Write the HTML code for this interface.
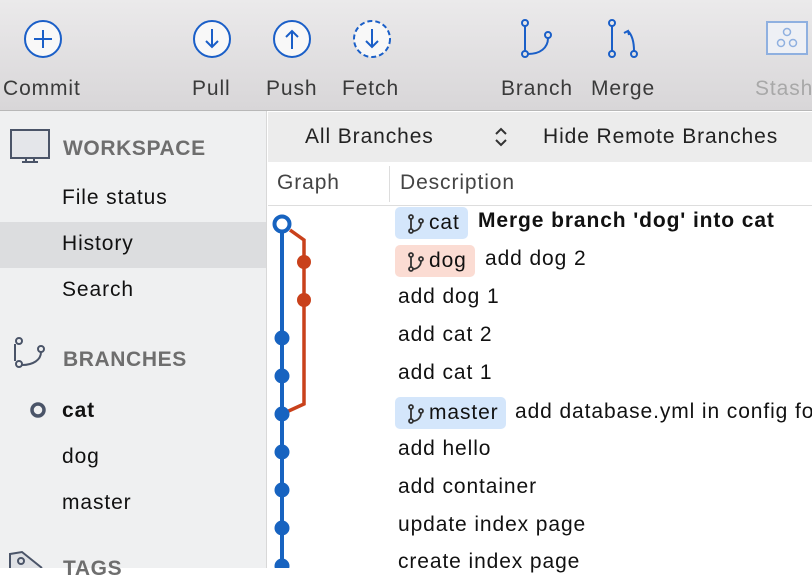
<!DOCTYPE html>
<html><head><style>
*{margin:0;padding:0;box-sizing:border-box}
body{width:812px;height:568px;overflow:hidden;font-family:"Liberation Sans",sans-serif;background:#fff;position:relative;font-size:21px;letter-spacing:0.9px}
.tb{position:absolute;left:0;top:0;width:812px;height:111px;background:linear-gradient(#ebeaeb,#d8d6d8);border-bottom:1px solid #b8b8b8}
.lbl{position:absolute;top:77px;font-size:21px;color:#3a3a3a}
.side{position:absolute;left:0;top:111px;width:267px;height:457px;background:#eff0f1;border-right:1px solid #d8d8d8}
.s{position:absolute;color:#111}
.h{position:absolute;color:#6e6e6e;font-weight:bold;letter-spacing:0.6px}
.fb{position:absolute;left:268px;top:112px;width:544px;height:50px;background:#ececec;color:#222}
.ch{position:absolute;left:268px;top:162px;width:544px;height:44px;background:#fff;border-bottom:1px solid #ddd;color:#444}
.r{position:absolute;left:398px;color:#111;white-space:nowrap}
.tag{position:absolute;height:32px;border-radius:5px;color:#111;padding-left:36px;line-height:32px;white-space:nowrap}
.tag svg{position:absolute;left:12px;top:7px}
</style></head><body>
<div class="tb">
<svg width="812" height="70" style="position:absolute;left:0;top:0" fill="none" stroke="#1a5fc8" stroke-width="2">
<circle cx="43" cy="39" r="18" fill="#f8f8f8"/><path d="M43 30v18M34 39h18"/>
<circle cx="212" cy="39" r="18" fill="#f8f8f8"/><path d="M212 29v18M206 41l6 6 6-6"/>
<circle cx="292" cy="39" r="18" fill="#f8f8f8"/><path d="M292 49V31M286 37l6-6 6 6"/>
<circle cx="372" cy="39" r="18" fill="#f8f8f8" stroke-dasharray="5 3"/><path d="M372 29v18M366 41l6 6 6-6"/>
<circle cx="525" cy="23" r="3"/><circle cx="525" cy="54" r="3"/><circle cx="548" cy="35" r="3"/><path d="M525 26v25M548 38c0 10-8 16-20 16"/>
<circle cx="612" cy="23" r="3"/><circle cx="612" cy="54" r="3"/><circle cx="634" cy="54" r="3"/><path d="M612 26v25M634 51c0-10-2-16-6-20M624 33l4-2 1 4"/>
<rect x="767" y="22" width="40" height="32" stroke="#8fb0e0" fill="#eef0f5"/><g stroke="#8fb0e0" stroke-width="1.5"><circle cx="787" cy="32" r="3.5"/><circle cx="781" cy="43" r="3.5"/><circle cx="793" cy="43" r="3.5"/></g>
</svg>
<div class="lbl" style="left:3px">Commit</div>
<div class="lbl" style="left:192px">Pull</div>
<div class="lbl" style="left:266px">Push</div>
<div class="lbl" style="left:342px">Fetch</div>
<div class="lbl" style="left:501px">Branch</div>
<div class="lbl" style="left:591px">Merge</div>
<div class="lbl" style="left:755px;color:#a8a8a8">Stash</div>
</div>
<div class="side">
<svg width="60" height="457" style="position:absolute;left:0;top:0" fill="none" stroke="#4a5468" stroke-width="2">
<rect x="11" y="19" width="38" height="28" fill="#e4e6ea"/><path d="M22 51h16M26 47v4M34 47v4"/>
<circle cx="19" cy="230" r="3"/><circle cx="19" cy="253" r="3"/><circle cx="41" cy="238" r="3"/><path d="M15 233v17M41 241c0 8-8 13-19 13"/>
<circle cx="38" cy="299" r="6" stroke-width="3.5"/>
<path d="M10 457v-14l12-2 20 16" fill="#dfe1e5"/><circle cx="21" cy="450" r="3"/>
</svg>
<div class="h" style="left:63px;top:26px">WORKSPACE</div>
<div class="s" style="left:62px;top:75px">File status</div>
<div style="position:absolute;left:0;top:111px;width:266px;height:46px;background:#dcdddf"></div>
<div class="s" style="left:62px;top:121px">History</div>
<div class="s" style="left:62px;top:167px">Search</div>
<div class="h" style="left:63px;top:237px">BRANCHES</div>
<div class="s" style="left:62px;top:288px;font-weight:bold">cat</div>
<div class="s" style="left:62px;top:334px">dog</div>
<div class="s" style="left:62px;top:380px">master</div>
<div class="h" style="left:63px;top:446px">TAGS</div>
</div>
<div class="fb"><span style="position:absolute;left:37px;top:13px">All Branches</span>
<svg width="14" height="22" style="position:absolute;left:226px;top:14px" fill="none" stroke="#333" stroke-width="2"><path d="M2 8l5-5 5 5M2 14l5 5 5-5"/></svg>
<span style="position:absolute;left:275px;top:13px">Hide Remote Branches</span></div>
<div class="ch"><span style="position:absolute;left:9px;top:9px">Graph</span><div style="position:absolute;left:121px;top:4px;width:1px;height:36px;background:#ddd"></div><span style="position:absolute;left:132px;top:9px">Description</span></div>
<svg width="60" height="362" style="position:absolute;left:268px;top:206px">
<path d="M14 18V362" stroke="#1763c0" stroke-width="4"/>
<path d="M22 24l14 10v164l-22 10" stroke="#c9411b" stroke-width="3.5" fill="none"/>
<circle cx="14" cy="18" r="7.5" fill="#fff" stroke="#1763c0" stroke-width="4"/>
<g fill="#c9411b"><circle cx="36" cy="56" r="7"/><circle cx="36" cy="94" r="7"/></g>
<g fill="#1763c0"><circle cx="14" cy="132" r="7.5"/><circle cx="14" cy="170" r="7.5"/><circle cx="14" cy="208" r="7.5"/><circle cx="14" cy="246" r="7.5"/><circle cx="14" cy="284" r="7.5"/><circle cx="14" cy="322" r="7.5"/><circle cx="14" cy="360" r="7.5"/></g>
</svg>
<div class="tag" style="left:395px;top:207px;width:73px;background:#d4e6fb;padding-left:34px"><svg width="18" height="20" fill="none" stroke="#333" stroke-width="1.8"><circle cx="4" cy="3" r="2"/><circle cx="4" cy="17" r="2"/><circle cx="14" cy="7" r="2"/><path d="M4 5v10M14 9c0 5-4 8-8 8"/></svg>cat</div>
<div class="r" style="left:478px;top:209px;font-weight:bold">Merge branch 'dog' into cat</div>
<div class="tag" style="left:395px;top:245px;width:80px;background:#fbdcd3;padding-left:34px"><svg width="18" height="20" fill="none" stroke="#333" stroke-width="1.8"><circle cx="4" cy="3" r="2"/><circle cx="4" cy="17" r="2"/><circle cx="14" cy="7" r="2"/><path d="M4 5v10M14 9c0 5-4 8-8 8"/></svg>dog</div>
<div class="r" style="left:485px;top:247px">add dog 2</div>
<div class="r" style="top:285px">add dog 1</div>
<div class="r" style="top:323px">add cat 2</div>
<div class="r" style="top:361px">add cat 1</div>
<div class="tag" style="left:395px;top:397px;width:111px;background:#d4e6fb;padding-left:34px"><svg width="18" height="20" fill="none" stroke="#333" stroke-width="1.8"><circle cx="4" cy="3" r="2"/><circle cx="4" cy="17" r="2"/><circle cx="14" cy="7" r="2"/><path d="M4 5v10M14 9c0 5-4 8-8 8"/></svg>master</div>
<div class="r" style="left:515px;top:400px">add database.yml in config fo</div>
<div class="r" style="top:437px">add hello</div>
<div class="r" style="top:475px">add container</div>
<div class="r" style="top:513px">update index page</div>
<div class="r" style="top:550px">create index page</div>
</body></html>
